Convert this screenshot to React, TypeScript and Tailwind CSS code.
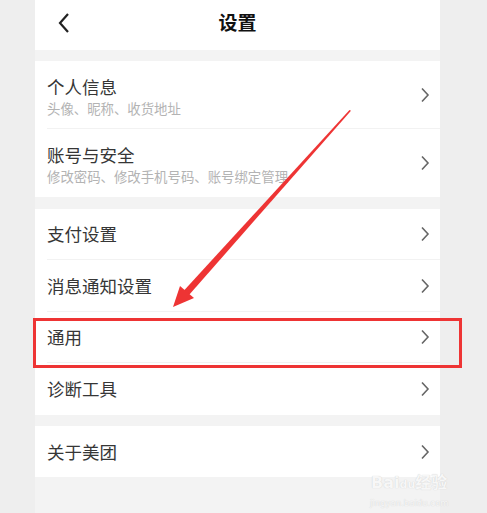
const font = "font-['Noto_Sans_CJK_SC','Noto_Sans',sans-serif]";

function Chevron() {
  return (
    <svg width="10" height="16" viewBox="0 0 10 16" className="shrink-0">
      <path d="M2 1.5 L8 8 L2 14.5" fill="none" stroke="#666" strokeWidth="1.6" />
    </svg>
  );
}

function Row({ title, sub, h, divider }: { title: string; sub?: string; h: string; divider?: boolean }) {
  return (
    <div className="pl-3">
      <div className={`flex items-center pr-[10px] ${h} ${divider ? "border-b border-[#f2f2f2]" : ""}`}>
        <div className={`flex-1 flex flex-col ${sub ? "pt-[3px]" : ""}`}>
          <span className="text-[17.5px] leading-[22px] text-[#363636]">{title}</span>
          {sub && <span className="text-[13.4px] leading-[18px] text-[#b3b3b3] mt-px">{sub}</span>}
        </div>
        <Chevron />
      </div>
    </div>
  );
}

export default function App() {
  return (
    <div className={`relative w-[487px] h-[513px] bg-[#eeeeee] overflow-hidden ${font}`}>
      <div className="ml-[35px] w-[405px] h-full bg-[#f3f3f3] flex flex-col">
        <div className="relative h-[50px] bg-white flex items-center justify-center">
          <svg width="14" height="22" viewBox="0 0 14 22" className="absolute left-[22px] top-[12px]">
            <path d="M11 2 L3 11 L11 20" fill="none" stroke="#222" strokeWidth="2.2" />
          </svg>
          <span className="text-[19px] font-bold text-[#111] -mt-[6px]">设置</span>
        </div>

        <div className="mt-[11px] bg-white">
          <Row title="个人信息" sub="头像、昵称、收货地址" h="h-[68px]" divider />
          <Row title="账号与安全" sub="修改密码、修改手机号码、账号绑定管理" h="h-[68px]" />
        </div>

        <div className="mt-[12px] bg-white">
          <Row title="支付设置" h="h-[51px]" divider />
          <Row title="消息通知设置" h="h-[52px]" divider />
          <Row title="通用" h="h-[51px]" divider />
          <Row title="诊断工具" h="h-[52px]" />
        </div>

        <div className="mt-[11px] bg-white">
          <Row title="关于美团" h="h-[51px]" />
        </div>
      </div>

      <div className="absolute left-[33px] top-[318px] w-[429px] h-[50px] border-[3px] border-[#ee3434]" />

      <svg width="487" height="513" className="absolute inset-0 pointer-events-none">
        <polygon points="349.5,110 351,110.8 189,295 184,290.5" fill="#ee3434" />
        <polygon points="173,307 180,286 194,298" fill="#ee3434" />
      </svg>

      <div className="absolute left-[370px] top-[471px] flex flex-col items-center text-[#f7f7f7] [text-shadow:0_0_1px_#c8c8c8] font-['DejaVu_Sans',sans-serif]">
        <span className="text-[16px] font-bold leading-[20px]">Bai<span className="text-[11px]">du</span><span className={font}>经验</span></span>
        <span className="text-[8.5px] leading-[12px] mt-[2px]">jingyan.baidu.com</span>
      </div>
    </div>
  );
}
